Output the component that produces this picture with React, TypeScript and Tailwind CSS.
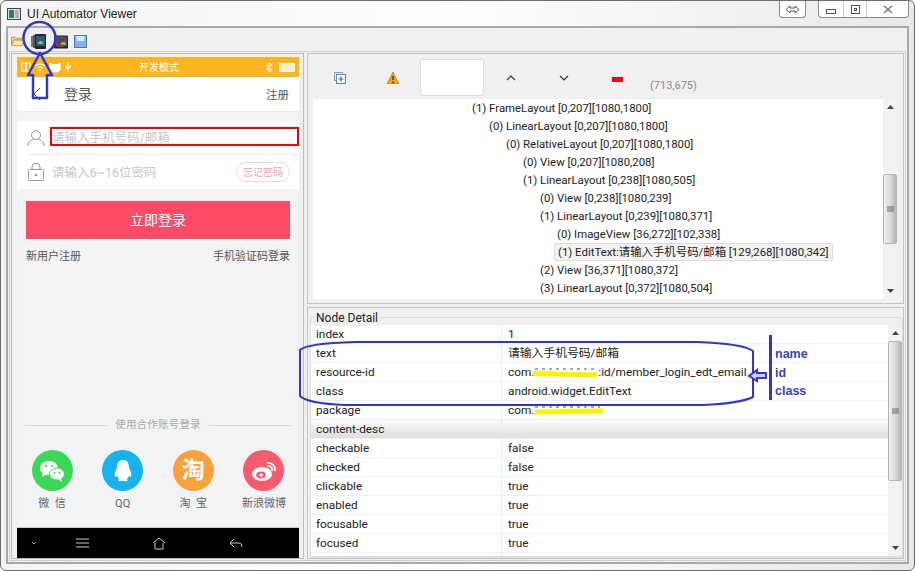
import React from "react";

const tree: [number, string, boolean?][] = [
  [0, "(1) FrameLayout [0,207][1080,1800]"],
  [1, "(0) LinearLayout [0,207][1080,1800]"],
  [2, "(0) RelativeLayout [0,207][1080,1800]"],
  [3, "(0) View [0,207][1080,208]"],
  [3, "(1) LinearLayout [0,238][1080,505]"],
  [4, "(0) View [0,238][1080,239]"],
  [4, "(1) LinearLayout [0,239][1080,371]"],
  [5, "(0) ImageView [36,272][102,338]"],
  [5, "(1) EditText:请输入手机号码/邮箱 [129,268][1080,342]", true],
  [4, "(2) View [36,371][1080,372]"],
  [4, "(3) LinearLayout [0,372][1080,504]"],
];

const indentClass = ["pl-[159px]", "pl-[176px]", "pl-[193px]", "pl-[210px]", "pl-[227px]", "pl-[244px]"];

const rows: [string, React.ReactNode][] = [
  ["index", "1"],
  ["text", "请输入手机号码/邮箱"],
  ["resource-id", <span key="r">com.<span className="inline-block w-[64px]" />:id/member_login_edt_email</span>],
  ["class", "android.widget.EditText"],
  ["package", "com."],
  ["content-desc", ""],
  ["checkable", "false"],
  ["checked", "false"],
  ["clickable", "true"],
  ["enabled", "true"],
  ["focusable", "true"],
  ["focused", "true"],
  ["scrollable", "false"],
];

function Scrollbar({ thumbTop, thumbHeight }: { thumbTop: string; thumbHeight: string }) {
  return (
    <div className="w-[14px] h-full flex flex-col bg-[#f2f2f2] shrink-0">
      <div className="h-[16px] flex items-center justify-center shrink-0">
        <svg width="7" height="4" viewBox="0 0 7 4"><path d="M0 4 L3.5 0 L7 4 Z" fill="#444" /></svg>
      </div>
      <div className="flex-1 min-h-0">
        <div className={`${thumbTop} ${thumbHeight} bg-gradient-to-r from-[#f0f0f0] via-[#dcdcdc] to-[#b4b4b4] border border-[#b5b5b5] rounded-[2px] flex items-center justify-center`}>
          <svg width="7" height="7" viewBox="0 0 7 7"><path d="M0 1 H7 M0 3 H7 M0 5 H7" stroke="#666" strokeWidth="1" /></svg>
        </div>
      </div>
      <div className="h-[16px] flex items-center justify-center shrink-0">
        <svg width="7" height="4" viewBox="0 0 7 4"><path d="M0 0 L3.5 4 L7 0 Z" fill="#444" /></svg>
      </div>
    </div>
  );
}

function Social({ label, bg, icon }: { label: string; bg: string; icon: React.ReactNode }) {
  return (
    <div className="w-[70px] flex flex-col items-center">
      <div className={`w-[41px] h-[41px] rounded-full ${bg} flex items-center justify-center`}>{icon}</div>
      <div className="mt-[5px] text-[11px] leading-[16px] text-[#666] whitespace-pre">{label}</div>
    </div>
  );
}

function Phone() {
  return (
    <div className="w-[282px] h-[501px] bg-[#f2f3f5] flex flex-col overflow-hidden text-[#555]">
      <div className="h-[20px] bg-[#fdb51f] flex items-center px-[4px] text-white shrink-0">
        <svg width="52" height="12" viewBox="0 0 52 12" fill="none" stroke="#fff">
          <rect x="1" y="2" width="4" height="8" /><rect x="5" y="2" width="4" height="8" />
          <path d="M14 5 q5 -4 10 0 M16 7 q3 -2 6 0 M18 9 q1 -1 2 0" strokeWidth="1.2" />
          <path d="M29 2 L31 3.5 H37 L39 2 V8 Q39 11 34 11 Q29 11 29 8 Z" fill="#fff" />
          <path d="M47 1 V11 M45 4 V7 H49 V4" />
        </svg>
        <div className="ml-[66px] pt-[2px] text-[10px] leading-[20px] w-[40px] text-center whitespace-nowrap">开发模式</div>
        <svg className="ml-[86px]" width="8" height="11" viewBox="0 0 8 11" fill="none" stroke="#fff"><path d="M1 3 L7 8 L4 10 V1 L7 3 L1 8" /></svg>
        <div className="ml-[6px] w-[16px] h-[9px] bg-[#fdeec4] border border-white rounded-[1px]" />
      </div>
      <div className="h-[35px] bg-white flex items-center shrink-0 border-b border-[#eceef0]">
        <svg className="ml-[15px]" width="10" height="14" viewBox="0 0 10 14" fill="none" stroke="#555"><path d="M8 1 L2 7 L8 13" /></svg>
        <div className="ml-[22px] text-[14px] text-[#555]">登录</div>
        <div className="ml-auto mr-[10px] mt-[4px] text-[11.5px] text-[#555]">注册</div>
      </div>
      <div className="mt-[9px] h-[68px] bg-white shrink-0 flex flex-col">
        <div className="h-[34px] flex items-center relative">
          <svg className="ml-[10px]" width="18" height="18" viewBox="0 0 18 18" fill="none" stroke="#999" strokeWidth="1"><circle cx="9" cy="6" r="4.5" /><path d="M1 17 C1 12 5 11 7 10 M17 17 C17 12 13 11 11 10" /></svg>
          <div className="ml-[7px] text-[12.5px] text-[#c8c8c8]">请输入手机号码/邮箱</div>
          <div className="absolute left-[33px] top-[6px] w-[249px] h-[19px] border-2 border-[#f00000]" />
          <div className="absolute left-[10px] right-0 bottom-0 h-px bg-[#eeeeee]" />
        </div>
        <div className="h-[34px] flex items-center">
          <svg className="ml-[10px]" width="18" height="18" viewBox="0 0 18 18" fill="none" stroke="#999" strokeWidth="1"><rect x="1.5" y="6.5" width="15" height="11" rx="1" /><path d="M5 6.5 V4 a4 4 0 0 1 8 0 V6.5" /><circle cx="9" cy="12" r="1" fill="#999" /></svg>
          <div className="ml-[7px] mt-[2px] text-[12.5px] text-[#c8c8c8]">请输入6~16位密码</div>
          <div className="ml-auto mr-[9px] w-[54px] h-[20px] rounded-full border border-[#fbd0d8] flex items-center justify-center text-[10px] text-[#f9a0b0]">忘记密码</div>
        </div>
      </div>
      <div className="mx-[9px] mt-[12px] h-[38px] bg-[#ff4a68] flex items-center justify-center text-white text-[14px] shrink-0">立即登录</div>
      <div className="mx-[9px] mt-[11px] flex justify-between text-[11px] leading-[14px] text-[#555] shrink-0">
        <span>新用户注册</span>
        <span>手机验证码登录</span>
      </div>
      <div className="mt-[154px] mx-[8px] flex items-center gap-[8px] shrink-0">
        <div className="flex-1 h-px bg-[#d8d8d8]" />
        <span className="text-[10.5px] leading-[14px] text-[#aaa] tracking-[0.2px]">使用合作账号登录</span>
        <div className="flex-1 h-px bg-[#d8d8d8]" />
      </div>
      <div className="mt-[18px] flex justify-between shrink-0">
        <Social label="微  信" bg="bg-[#3bd856]" icon={
          <svg width="28" height="24" viewBox="0 0 28 24" fill="#fff">
            <ellipse cx="11" cy="9" rx="9" ry="7" /><path d="M5 13 L4 18 L10 15 Z" />
            <ellipse cx="19" cy="15" rx="7.5" ry="6" stroke="#3bd856" /><path d="M23 19 L24 23 L20 20 Z" />
            <circle cx="8" cy="7" r="1.1" fill="#3bd856" /><circle cx="14" cy="7" r="1.1" fill="#3bd856" />
            <circle cx="16.5" cy="14" r="1" fill="#3bd856" /><circle cx="21.5" cy="14" r="1" fill="#3bd856" />
          </svg>
        } />
        <Social label="QQ" bg="bg-[#17b3ee]" icon={
          <svg width="20" height="24" viewBox="0 0 20 24" fill="#fff"><path d="M10 1 C5 1 4 5 4 9 C2 12 1 16 2 18 L4 17 L6 20 C5 21 5 23 8 22 L12 22 C15 23 15 21 14 20 L16 17 L18 18 C19 16 18 12 16 9 C16 5 15 1 10 1 Z" /></svg>
        } />
        <Social label="淘  宝" bg="bg-[#f9a23c]" icon={<span className="text-white font-bold text-[23px] leading-none">淘</span>} />
        <Social label="新浪微博" bg="bg-[#f85a6e]" icon={
          <svg width="26" height="22" viewBox="0 0 26 22" fill="none"><ellipse cx="11" cy="14" rx="10" ry="7" fill="#fff" /><ellipse cx="10" cy="15" rx="5" ry="3.5" fill="#f85a6e" /><ellipse cx="10" cy="15" rx="2" ry="1.5" fill="#fff" /><path d="M16 3 a7 7 0 0 1 8 8 M16 6 a4 4 0 0 1 5 5" stroke="#fff" strokeWidth="1.8" /></svg>
        } />
      </div>
      <div className="mt-auto h-[31px] bg-black border-t border-[#ccc] flex items-center shrink-0">
        <svg className="ml-[14px]" width="6" height="4" viewBox="0 0 6 4" fill="none" stroke="#aaa"><path d="M1 1 L3 3 L5 1" /></svg>
        <svg className="ml-[39px]" width="13" height="10" viewBox="0 0 13 10" stroke="#ccc"><path d="M0 1 H13 M0 5 H13 M0 9 H13" /></svg>
        <svg className="ml-[63px]" width="14" height="13" viewBox="0 0 14 13" fill="none" stroke="#ccc"><path d="M1 6 L7 1 L13 6 M3 6 V12 H11 V6" /></svg>
        <svg className="ml-[63px]" width="14" height="10" viewBox="0 0 14 10" fill="none" stroke="#ccc"><path d="M5 1 L1 5 L5 9 M1 5 H10 Q13 5 13 9" /></svg>
      </div>
    </div>
  );
}

function RightToolbar() {
  return (
    <div className="h-[45px] flex items-start shrink-0">
      <svg className="ml-[26px] mt-[18px]" width="12" height="12" viewBox="0 0 12 12" fill="none">
        <rect x="0.5" y="0.5" width="8" height="8" fill="#dfe9f6" stroke="#8aa3c4" />
        <rect x="2.5" y="2.5" width="9" height="9" fill="#fff" stroke="#5f84b5" />
        <path d="M7 4.5 V9.5 M4.5 7 H9.5" stroke="#1f6fb8" strokeWidth="1.2" />
      </svg>
      <svg className="ml-[41px] mt-[18px]" width="12" height="12" viewBox="0 0 12 12">
        <path d="M6 0 L12 12 H0 Z" fill="#f2a60d" stroke="#7a5200" strokeWidth="0.5" />
        <path d="M6 4 V8 M6 9.5 V11" stroke="#222" strokeWidth="1.2" />
      </svg>
      <div className="ml-[21px] mt-[5px] w-[64px] h-[37px] bg-white border border-[#dddddd] rounded-[2px] shrink-0" />
      <svg className="ml-[22px] mt-[21px]" width="10" height="6" viewBox="0 0 10 6" fill="none" stroke="#333" strokeWidth="1.2"><path d="M1 5 L5 1 L9 5" /></svg>
      <svg className="ml-[43px] mt-[21px]" width="10" height="6" viewBox="0 0 10 6" fill="none" stroke="#333" strokeWidth="1.2"><path d="M1 1 L5 5 L9 1" /></svg>
      <div className="ml-[43px] mt-[23px] w-[11px] h-[5px] bg-[#e8001c]" />
      <div className="ml-[27px] mt-[25px] text-[11px] leading-[14px] text-[#8c8c8c]">(713,675)</div>
    </div>
  );
}

export default function App() {
  return (
    <div className="w-[915px] h-[571px] relative overflow-hidden bg-white font-['Roboto','Noto_Sans_CJK_SC',sans-serif] text-[#222]">
      <div className="h-full flex flex-col border border-[#6e6e6e] rounded-[6px] bg-gradient-to-r from-[#f4f4f4] via-[#ffffff] to-[#e8e8e8]">
        <div className="h-[25px] flex items-center shrink-0">
          <svg className="ml-[6px]" width="14" height="12" viewBox="0 0 14 12">
            <rect x="0.5" y="0.5" width="13" height="11" fill="#dfe4e6" stroke="#444" />
            <rect x="2" y="2" width="5" height="8" fill="#2b7a78" />
            <rect x="8" y="2" width="4" height="8" fill="#aab4b8" />
          </svg>
          <div className="ml-[6px] font-['Liberation_Sans','Noto_Sans',sans-serif] text-[12px] text-[#222]">UI Automator Viewer</div>
          <div className="ml-auto mr-[5px] flex self-start items-start">
            <div className="w-[27px] h-[17px] border border-t-0 border-[#8a8a8a] rounded-b-[4px] flex items-center justify-center bg-white">
              <svg width="15" height="9" viewBox="0 0 15 9" fill="none" stroke="#555"><path d="M5 1 L1 4.5 L5 8 V6 H10 V8 L14 4.5 L10 1 V3 H5 Z" /></svg>
            </div>
            <div className="ml-[12px] w-[91px] h-[17px] border border-t-0 border-[#8a8a8a] rounded-b-[4px] flex bg-white">
              <div className="w-[25px] flex items-center justify-center border-r border-[#c8c8c8]"><div className="w-[10px] h-[5px] mt-[4px] border border-[#555]" /></div>
              <div className="w-[23px] flex items-center justify-center border-r border-[#c8c8c8]"><div className="w-[9px] h-[9px] border border-[#555] flex items-center justify-center"><div className="w-[3px] h-[3px] border border-[#555]" /></div></div>
              <div className="flex-1 flex items-center justify-center">
                <svg width="10" height="9" viewBox="0 0 10 9" fill="none" stroke="#777" strokeWidth="1.3"><path d="M1 1 L9 8 M9 1 L1 8" /></svg>
              </div>
            </div>
          </div>
        </div>
        <div className="mx-[5px] mb-[6px] flex-1 min-h-0 border-2 border-[#a9a9a9] bg-[#f0f0f0] flex flex-col">
          <div className="h-[23px] flex items-center pl-[3px] pt-[3px] shrink-0">
            <svg width="14" height="12" viewBox="0 0 15 12"><path d="M0.5 2 H5 L6 3 H12 V5 H3 L0.5 11 Z" fill="#f2d58a" stroke="#b99a4a" /><path d="M3 5 H14.5 L12 11 H0.5 Z" fill="#fbe7ae" stroke="#b99a4a" /></svg>
            <svg className="ml-[6px]" width="15" height="15" viewBox="0 0 15 15"><rect x="0" y="2" width="3" height="11" fill="#777" /><rect x="2" y="1" width="3" height="13" fill="#555" /><rect x="4" y="0" width="11" height="15" rx="1" fill="#223" /><rect x="5" y="2" width="9" height="10" fill="#2d5d86" /><path d="M7 10 a2.5 3 0 0 1 5 0 Z" fill="#9bc53d" /></svg>
            <svg className="ml-[8px]" width="14" height="15" viewBox="0 0 15 15"><rect x="0" y="1" width="15" height="14" rx="1" fill="#223" /><rect x="2" y="2" width="12" height="11" fill="#3c4f63" /><circle cx="7" cy="8" r="5" fill="none" stroke="#d03020" strokeWidth="1.2" /><path d="M7 11 a3 3 0 0 1 6 0 Z" fill="#9bc53d" /></svg>
            <svg className="ml-[6px]" width="13" height="13" viewBox="0 0 13 13"><rect x="0.5" y="0.5" width="12" height="12" fill="#7fb4e3" stroke="#4a78a8" /><rect x="2.5" y="1" width="8" height="5" fill="#d8e8f6" /></svg>
          </div>
          <div className="flex-1 min-h-0 mx-[1px] mb-[1px] border border-[#cfcfcf] flex gap-[3px] p-[1px]">
            <div className="w-[293px] shrink-0 border border-[#bdbdbd] bg-[#f0f0f0] pl-[5px] pt-[3px]">
              <Phone />
            </div>
            <div className="flex-1 min-w-0 flex flex-col gap-[3px]">
              <div className="h-[251px] border border-[#c4c4c4] flex flex-col shrink-0">
                <RightToolbar />
                <div className="flex-1 min-h-0 ml-[5px] mr-[6px] mb-[4px] flex">
                  <div className="flex-1 min-w-0 bg-white overflow-hidden text-[11.4px]">
                    {tree.map(([lvl, t, sel], i) => (
                      <div key={i} className={`h-[18px] leading-[19px] whitespace-nowrap ${indentClass[lvl]}`}>
                        <span className={sel ? "inline-block h-[18px] pl-[3px] pr-[3px] -ml-[3px] bg-[#f3f3f3] border border-[#dcdcdc] rounded-[2px] leading-[16px]" : ""}>{t}</span>
                      </div>
                    ))}
                  </div>
                  <Scrollbar thumbTop="mt-[59px]" thumbHeight="h-[70px]" />
                </div>
              </div>
              <div className="flex-1 min-h-0 border border-[#c4c4c4] pt-[9px] pl-[2px]">
                <div className="relative h-full border border-[#dcdcdc] rounded-[2px] pt-[7px]">
                  <div className="absolute left-[4px] -top-[8px] text-[12px] leading-[16px] bg-[#f0f0f0] px-[1px]">Node Detail</div>
                  <div className="h-full flex bg-white border-b border-[#d8e0e8]">
                    <div className="flex-1 min-w-0 overflow-hidden text-[11.8px]">
                      {rows.map(([k, v], i) => (
                        <div key={i} className={`h-[19px] flex items-center border-b border-[#eef0f3] ${k === "content-desc" ? "bg-gradient-to-b from-[#fafafa] to-[#dedede]" : ""}`}>
                          <div className="w-[191px] pl-[5px] border-r border-[#e8edf3] h-full leading-[18px] shrink-0">{k}</div>
                          <div className="pl-[6px] h-full leading-[18px] whitespace-pre">{v}</div>
                        </div>
                      ))}
                    </div>
                    <Scrollbar thumbTop="mt-0" thumbHeight="h-[140px]" />
                  </div>
                </div>
              </div>
            </div>
          </div>
        </div>
      </div>

      {/* hand-drawn annotations lying over the screenshot */}
      <svg className="absolute inset-0 pointer-events-none" width="915" height="571" viewBox="0 0 915 571" fill="none">
        <circle cx="39.5" cy="38" r="16" stroke="#3038cc" strokeWidth="2.5" />
        <path d="M33 98 H47 V75 H52 L40 53 L28 75 H33 Z" stroke="#3038cc" strokeWidth="2.5" strokeLinejoin="round" />
        <path d="M300 350 C304 346 320 343 355 342 H697 C725 343 745 345 753 351 V397 C745 401 725 404 703 405 H345 C320 404 305 401 300 396 Z" stroke="#3038cc" strokeWidth="2" />
        <path d="M770.5 335 V400" stroke="#3038cc" strokeWidth="3" />
        <path d="M766 373 H757 V370 L749 376 L757 381 V378 H766 Z" stroke="#3038cc" strokeWidth="2" fill="#cfd2f5" />
        <path d="M533 373.5 L597 375" stroke="#fff200" strokeWidth="5" />
        <path d="M535 369 H594" stroke="#555" strokeWidth="1" strokeDasharray="3 4" />
        <path d="M535 412 L603 411" stroke="#fff200" strokeWidth="5" />
        <path d="M535 407 H600" stroke="#555" strokeWidth="1" strokeDasharray="3 4" />
      </svg>
      <div className="absolute left-[775px] top-[347px] text-[12.5px] leading-[15px] font-bold text-[#3a3fc8] font-['Liberation_Sans',sans-serif]">name</div>
      <div className="absolute left-[775px] top-[366px] text-[12.5px] leading-[15px] font-bold text-[#3a3fc8] font-['Liberation_Sans',sans-serif]">id</div>
      <div className="absolute left-[775px] top-[384px] text-[12.5px] leading-[15px] font-bold text-[#3a3fc8] font-['Liberation_Sans',sans-serif]">class</div>
    </div>
  );
}
